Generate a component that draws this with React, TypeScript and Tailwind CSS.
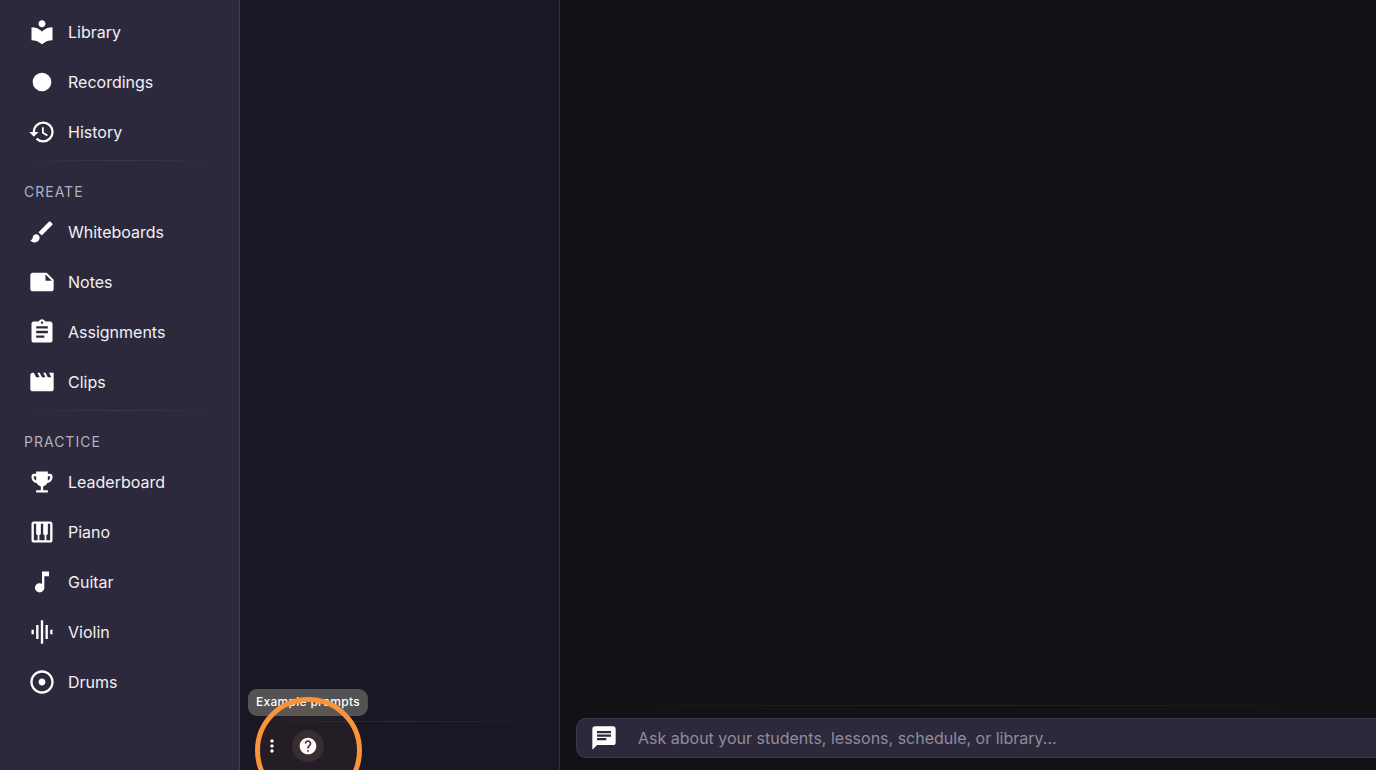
import React from 'react';
import type { IconType } from 'react-icons';
import {
  MdAdjust,
  MdAssignment,
  MdBrush,
  MdChat,
  MdEmojiEvents,
  MdFiberManualRecord,
  MdGraphicEq,
  MdHelp,
  MdHistory,
  MdLocalLibrary,
  MdMoreVert,
  MdMovie,
  MdMusicNote,
  MdNote,
  MdPiano,
} from 'react-icons/md';

interface NavItem {
  label: string;
  icon: IconType;
}

interface NavSection {
  title?: string;
  items: NavItem[];
}

const sections: NavSection[] = [
  {
    items: [
      { label: 'Library', icon: MdLocalLibrary },
      { label: 'Recordings', icon: MdFiberManualRecord },
      { label: 'History', icon: MdHistory },
    ],
  },
  {
    title: 'Create',
    items: [
      { label: 'Whiteboards', icon: MdBrush },
      { label: 'Notes', icon: MdNote },
      { label: 'Assignments', icon: MdAssignment },
      { label: 'Clips', icon: MdMovie },
    ],
  },
  {
    title: 'Practice',
    items: [
      { label: 'Leaderboard', icon: MdEmojiEvents },
      { label: 'Piano', icon: MdPiano },
      { label: 'Guitar', icon: MdMusicNote },
      { label: 'Violin', icon: MdGraphicEq },
      { label: 'Drums', icon: MdAdjust },
    ],
  },
];

const Divider: React.FC = () => (
  <div className="h-px bg-linear-to-r from-transparent via-white/8 to-transparent" />
);

const Sidebar: React.FC = () => (
  <nav className="w-60 shrink-0 border-r border-[#413e50] bg-[#2d293d] pt-[7px]">
    {sections.map((section, i) => (
      <div key={i}>
        {section.title && (
          <div className="px-6 pt-[3px]">
            <Divider />
            <h2 className="pt-[21px] pb-[5px] text-sm leading-5 tracking-[1px] text-[#b3b0bd] uppercase">
              {section.title}
            </h2>
          </div>
        )}
        <ul>
          {section.items.map(({ label, icon: Icon }) => (
            <li key={label}>
              <a href="#" className="flex h-[50px] items-center gap-3 px-7 text-base text-[#f1f0f4]">
                <Icon className="size-7 text-white" />
                {label}
              </a>
            </li>
          ))}
        </ul>
      </div>
    ))}
  </nav>
);

const ChatList: React.FC = () => (
  <aside className="flex w-80 shrink-0 flex-col justify-end border-r border-[#322f3d] bg-[#1a1724]">
    <Divider />
    <div className="flex h-12 items-center gap-1 px-4">
      <button type="button" aria-label="More options" className="flex size-8 items-center justify-center text-white">
        <MdMoreVert className="size-5" />
      </button>
      <div className="relative">
        <button
          type="button"
          aria-label="Example prompts"
          className="flex size-8 items-center justify-center rounded-full bg-[#2d2933] text-white"
        >
          <MdHelp className="size-5" />
        </button>
        <div
          role="tooltip"
          className="absolute bottom-full left-1/2 mb-3.5 -translate-x-1/2 rounded-[9px] bg-[#545354] px-2 pt-[3px] pb-1 text-xs leading-5 font-medium tracking-wide whitespace-nowrap text-white"
        >
          Example prompts
        </div>
        {/* highlight ring around the help button */}
        <div className="pointer-events-none absolute -top-[33px] -left-[37px] size-[107px] rounded-full border-5 border-[#f9943b] bg-[#f9943b]/5" />
      </div>
    </div>
  </aside>
);

const Composer: React.FC = () => (
  <div>
    <Divider />
    <div className="py-3 pl-4">
      <label className="flex h-10 items-center gap-5 rounded-l-[10px] border border-r-0 border-[#3a374a] bg-[#2d293d] pl-[13px]">
        <MdChat className="size-7 shrink-0 text-white" />
        <input
          type="text"
          aria-label="Message"
          placeholder="Ask about your students, lessons, schedule, or library..."
          className="min-w-0 flex-1 bg-transparent text-base text-white outline-none placeholder:text-[#8f8c9b]"
        />
      </label>
    </div>
  </div>
);

export default function App() {
  return (
    <div className="flex h-screen overflow-hidden bg-[#121116] font-[Inter,sans-serif]">
      <Sidebar />
      <ChatList />
      <main className="flex min-w-0 flex-1 flex-col justify-end">
        <Composer />
      </main>
    </div>
  );
}
